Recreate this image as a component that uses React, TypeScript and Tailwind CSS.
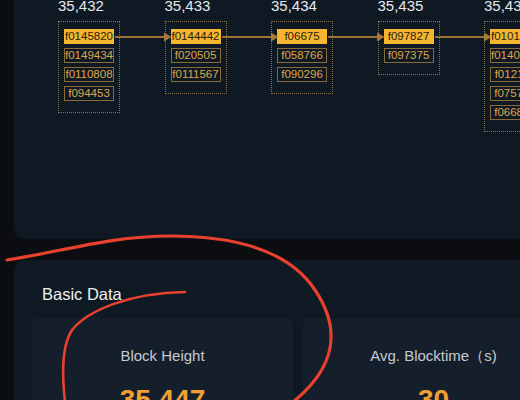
const chain = [
  { height: '35,432', items: ['f0145820', 'f0149434', 'f0110808', 'f094453'] },
  { height: '35,433', items: ['f0144442', 'f020505', 'f0111567'] },
  { height: '35,434', items: ['f06675', 'f058766', 'f090296'] },
  { height: '35,435', items: ['f097827', 'f097375'] },
  { height: '35,436', items: ['f0101016', 'f0140386', 'f012113', 'f075721', 'f066812'] },
];

const stats = [
  { label: 'Block Height', value: '35,447' },
  { label: 'Avg. Blocktime（s)', value: '30' },
];

function Arrow() {
  return (
    <svg className="absolute left-[-50.5px] top-[10.5px] w-[56.5px] h-[10px]" viewBox="0 0 56.5 10">
      <line x1="0" y1="5" x2="50" y2="5" stroke="#9c7238" strokeWidth="2" />
      <polygon points="49,0.5 56.5,5 49,9.5" fill="#a87a3a" />
    </svg>
  );
}

export default function App() {
  return (
    <div className="relative w-[520px] h-[400px] overflow-hidden bg-[#0b0d11] font-['Liberation_Sans',Arial,sans-serif]">
      <div className="pl-[14px] flex flex-col">
        {/* block chain panel */}
        <div className="w-[560px] h-[239px] bg-[#0f1923] rounded-b-[10px] pl-[44px] overflow-hidden">
          <div className="flex items-start gap-[44.5px] mt-[-4.5px]">
            {chain.map((col, i) => (
              <div key={col.height} className="flex flex-col w-[62px] shrink-0">
                <div className="h-[20px] leading-[20px] text-[15px] text-[#e6e8eb] whitespace-nowrap">{col.height}</div>
                <div className="relative mt-[5px] border border-dotted border-[#8c7448] px-[5px] pt-[7px] pb-[11px] flex flex-col gap-[4px]">
                  {i > 0 && <Arrow />}
                  {col.items.map((id, j) => (
                    <div
                      key={id}
                      className={
                        j === 0
                          ? 'w-[50px] h-[15px] bg-[#f5b531] text-[#2a1e08] text-[11.5px] leading-[15px] text-center overflow-hidden whitespace-nowrap'
                          : 'w-[50px] h-[15px] border border-[#8a6a38] text-[#dea64c] text-[11.5px] leading-[13px] text-center overflow-hidden whitespace-nowrap'
                      }
                    >
                      {id}
                    </div>
                  ))}
                </div>
              </div>
            ))}
          </div>
        </div>

        {/* basic data panel */}
        <div className="mt-[21px] w-[600px] h-[200px] bg-[#0f1923] rounded-t-[10px] pt-[22px] px-[18px]">
          <div className="ml-[10px] text-[16.5px] leading-[24px] text-[#eef0f2]">Basic Data</div>
          <div className="mt-[12px] flex gap-[10px]">
            {stats.map((s) => (
              <div key={s.label} className="w-[261px] h-[120px] shrink-0 rounded-[6px] bg-[#151f2c] flex flex-col items-center pt-[28px]">
                <div className="text-[15px] leading-[20px] text-[#c5c9cf] whitespace-nowrap">{s.label}</div>
                <div className="mt-[17px] text-[28px] leading-[34px] font-semibold text-[#f0a033]">{s.value}</div>
              </div>
            ))}
          </div>
        </div>
      </div>

      {/* hand-drawn annotation */}
      <svg className="absolute inset-0 w-[520px] h-[400px] pointer-events-none" viewBox="0 0 520 400">
        <path
          d="M7,260 C60,252 110,236 170,236 C240,236 290,252 315,290 C342,330 335,368 293,402"
          fill="none"
          stroke="#e8412e"
          strokeWidth="3.2"
          strokeLinecap="round"
        />
        <path
          d="M185,292 C130,293 88,310 72,330 C62,345 62,375 65,402"
          fill="none"
          stroke="#e8412e"
          strokeWidth="2.6"
          strokeLinecap="round"
        />
      </svg>
    </div>
  );
}
